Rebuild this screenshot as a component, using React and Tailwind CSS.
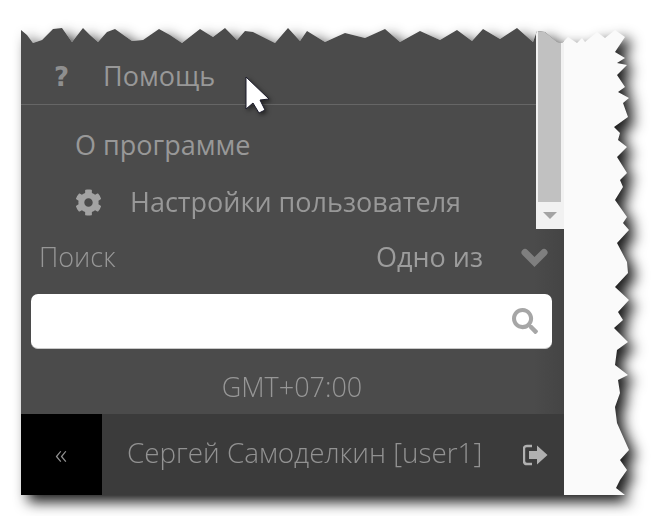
import React from 'react';
import { FaCog, FaSearch } from 'react-icons/fa';

// torn paper outline, in page coordinates
const outline = [
  [21, 30], [27, 35], [33, 43], [42, 40], [53, 29], [62, 28], [72, 42], [83, 28], [90, 35], [98, 42],
  [107, 32], [115, 29], [132, 41], [143, 40], [159, 29], [170, 35], [182, 43], [200, 29], [213, 37],
  [225, 28], [237, 40], [245, 31], [253, 32], [275, 43], [288, 28], [300, 41], [307, 31], [325, 42],
  [345, 33], [365, 38], [385, 29], [400, 42], [420, 31], [440, 40], [457, 30], [472, 41], [483, 29],
  [500, 39], [517, 28], [533, 42], [537, 31], [545, 32], [557, 42], [562, 43], [568, 37], [577, 43],
  [582, 38], [585, 42], [597, 32], [605, 38], [615, 30], [625, 37],
  [615, 52], [625, 58], [617, 63], [627, 65], [617, 75], [625, 87], [618, 92], [629, 98], [623, 103],
  [628, 117], [614, 127], [620, 133], [618, 140], [627, 147], [617, 157], [627, 173], [620, 180],
  [623, 187], [615, 200], [627, 217], [623, 223], [629, 230], [617, 243], [627, 262], [628, 273],
  [615, 287], [629, 300], [618, 312], [623, 320], [614, 328], [628, 342], [617, 350], [615, 365],
  [628, 375], [618, 380], [620, 393], [615, 407], [617, 423], [629, 450], [620, 460], [627, 470],
  [620, 480], [616, 488], [625, 495], [21, 495],
];

const paperClip = `polygon(${outline.map(([x, y]) => `${x - 21}px ${y - 28}px`).join(',')})`;

const MenuRow = ({ className, children }) => (
  <div className={`flex items-center text-[#989898] text-[27px] ${className}`}>{children}</div>
);

export default function App() {
  return (
    <div className="relative w-[657px] h-[516px] bg-white pt-[28px] pl-[21px] overflow-hidden font-['Open_Sans',sans-serif]">
      <div className="w-[608px] h-[467px] drop-shadow-[7px_7px_7px_rgba(0,0,0,0.9)]">
        <div className="flex h-full bg-[#fafafa]" style={{ clipPath: paperClip }}>
          <div className="w-[543px] flex flex-col bg-[#4b4b4b]">
            <div className="h-[201px] flex">
              <div className="w-[515px]">
                <div className="h-[77px] flex items-center pl-[33px] pt-[21px] border-b border-[#666666] text-[#989898] text-[27px]">
                  <span className="w-[17px] font-['DejaVu_Sans',sans-serif] font-bold text-[26px] text-[#8f8f8f] leading-none">?</span>
                  <span className="ml-[32px]">Помощь</span>
                </div>
                <MenuRow className="h-[56px] pl-[54px] pt-[25px]">О программе</MenuRow>
                <MenuRow className="h-[57px] pl-[54px] pt-[25px]">
                  <FaCog className="w-[27px] h-[27px] text-[#a3a3a3]" />
                  <span className="ml-[28px]">Настройки пользователя</span>
                </MenuRow>
              </div>
              <div className="w-[28px] bg-[#f1f1f1] pl-[2px] pr-[3px] flex flex-col">
                <div className="h-[174px] bg-[#c1c1c1]" />
                <div className="flex-1 flex items-center justify-center">
                  <div className="w-0 h-0 border-x-[7px] border-x-transparent border-t-[7px] border-t-[#a3a3a3]" />
                </div>
              </div>
            </div>
            <div className="flex-1 flex flex-col bg-[linear-gradient(to_left,#444444,#4b4b4b_30px)]">
              <div className="h-[65px] pb-[9px] flex items-center pl-[18px] pr-[16px]">
                <span className="font-light text-[27px] text-[#979797]">Поиск</span>
                <span className="ml-auto text-[27px] text-[#9c9c9c]">Одно из</span>
                <svg className="ml-[38px] w-[27px] h-[19px] text-[#7f7f7f]" viewBox="0 0 27 19">
                  <path d="M4 4.5 L13.5 14 L23 4.5" fill="none" stroke="currentColor" strokeWidth="7" strokeLinecap="round" strokeLinejoin="miter" />
                </svg>
              </div>
              <div className="mx-[10px] w-[521px] h-[55px] bg-white rounded-[7px] border-b border-[#c8c8c8] flex items-center justify-end pr-[14px]">
                <FaSearch className="w-[26px] h-[26px] text-[#a6a6a6]" />
              </div>
              <div className="flex-1 flex items-center justify-center font-light text-[27px] text-[#979797] pr-[1px] pt-[11px]">GMT+07:00</div>
            </div>
            <div className="h-[81px] bg-[#3b3b3b] flex items-center">
              <div className="w-[81px] h-full pb-[3px] pr-[1px] bg-black flex items-center justify-center text-[28px] font-light text-[#909090]">«</div>
              <span className="ml-[25px] pb-[3px] font-light text-[27.8px] text-[#929292]">Сергей Самоделкин [user1]</span>
              <svg className="ml-[41px] w-[25px] h-[22px] text-[#b0b0b0]" viewBox="0 0 25 22">
                <path d="M9 2 H4 Q1 2 1 5 V17 Q1 20 4 20 H9" fill="none" stroke="currentColor" strokeWidth="2.4" />
                <path d="M6 7 H14 V1.5 L24.5 11 L14 20.5 V15 H6 Z" fill="currentColor" />
              </svg>
            </div>
          </div>
        </div>
      </div>
      <svg className="absolute left-[245px] top-[76px] drop-shadow-[2px_2px_2px_rgba(0,0,0,0.5)]" width="28" height="38" viewBox="0 0 28 38">
        <path d="M1 1 L1 33 L8 27 L14 37 L20 34 L15 24 L24 23 Z" fill="#fff" stroke="#1c1c2c" strokeWidth="1" strokeLinejoin="round" />
      </svg>
    </div>
  );
}
